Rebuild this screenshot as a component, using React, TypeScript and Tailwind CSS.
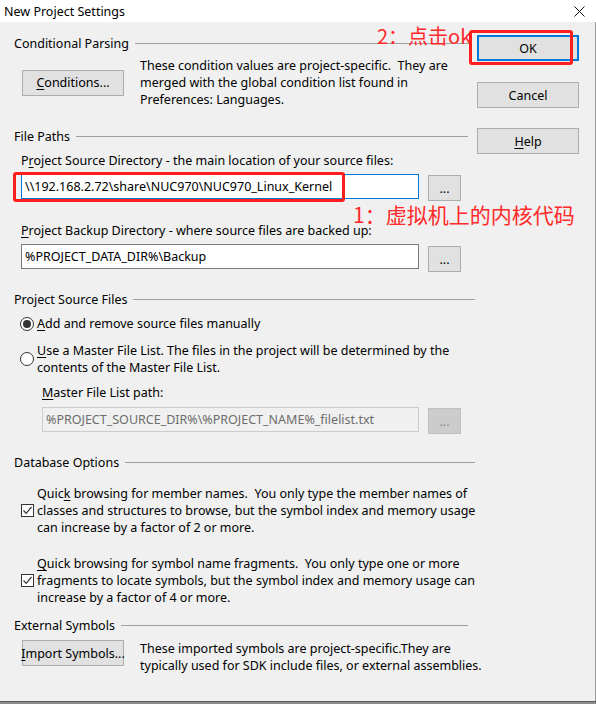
import React from "react";

const Btn: React.FC<{ children: React.ReactNode; className?: string }> = ({
  children,
  className = "",
}) => (
  <div
    className={`shrink-0 whitespace-nowrap flex items-center justify-center bg-[#e1e1e1] border border-[#adadad] ${className}`}
  >
    {children}
  </div>
);

const GroupHeader: React.FC<{ title: string; end?: string }> = ({
  title,
  end = "mr-[2px]",
}) => (
  <div className={`flex items-center h-[16px] ${end}`}>
    <span className="whitespace-nowrap">{title}</span>
    <div className="flex-1 h-px bg-[#a0a0a0] ml-[6px]" />
  </div>
);

const Check = () => (
  <div className="w-[13px] h-[13px] shrink-0 border border-[#333] bg-white flex items-center justify-center">
    <svg width="11" height="11" viewBox="0 0 11 11">
      <path d="M1.5 5.5 L4.2 8.3 L9.5 2" fill="none" stroke="#333" strokeWidth="1.2" />
    </svg>
  </div>
);

const Radio: React.FC<{ on?: boolean }> = ({ on }) => (
  <div className="w-[14px] h-[14px] shrink-0 rounded-full border border-[#333] bg-white flex items-center justify-center">
    {on && <div className="w-[8px] h-[8px] rounded-full bg-[#333]" />}
  </div>
);

const U: React.FC<{ children: React.ReactNode }> = ({ children }) => (
  <span className="underline underline-offset-[2px] decoration-1">{children}</span>
);

export default function App() {
  return (
    <div className="w-[596px] h-[704px] relative flex flex-col bg-[#f0f0f0] overflow-hidden font-['Noto_Sans','Noto_Sans_CJK_SC',sans-serif] text-[12.5px] leading-[17px] text-black">
      {/* title bar */}
      <div className="h-[22px] shrink-0 bg-white flex items-center justify-between pl-[4px] pr-[11px]">
        <span className="text-[12.5px]">New Project Settings</span>
        <svg width="11" height="11" viewBox="0 0 11 11">
          <path d="M0.5 0.5 L10.5 10.5 M10.5 0.5 L0.5 10.5" stroke="#111" strokeWidth="1" />
        </svg>
      </div>

      <div className="flex-1 flex border-r border-[#9a9a9a]">
        {/* left column */}
        <div className="w-[477px] shrink-0 pl-[14px] flex flex-col">
          <div className="mt-[13px]">
            <GroupHeader title="Conditional Parsing" end="mr-[7px]" />
          </div>
          <div className="mt-[6px] flex items-center">
            <Btn className="ml-[8px] w-[102px] h-[26px]">
              <span>
                <U>C</U>onditions...
              </span>
            </Btn>
            <div className="ml-[16px] whitespace-pre">
              {"These condition values are project-specific.  They are\nmerged with the global condition list found in\nPreferences: Languages."}
            </div>
          </div>

          <div className="mt-[20px]">
            <GroupHeader title="File Paths" end="mr-[9px]" />
          </div>
          <div className="mt-[8px] pl-[7px] whitespace-nowrap">
            P<U>r</U>oject Source Directory - the main location of your source files:
          </div>
          <div className="mt-[5px] pl-[7px] flex items-start">
            <div className="w-[398px] h-[25px] shrink-0 bg-white border border-[#0078d7] flex items-center pl-[3px] whitespace-nowrap">
              {"\\\\192.168.2.72\\share\\NUC970\\NUC970_Linux_Kernel"}
            </div>
            <Btn className="ml-[9px] mt-[1px] w-[33px] h-[26px]">...</Btn>
          </div>
          <div className="mt-[21px] pl-[7px] whitespace-nowrap">
            <U>P</U>roject Backup Directory - where source files are backed up:
          </div>
          <div className="mt-[5px] pl-[7px] flex items-start">
            <div className="w-[398px] h-[25px] shrink-0 bg-white border border-[#7a7a7a] flex items-center pl-[3px] whitespace-nowrap">
              {"%PROJECT_DATA_DIR%\\Backup"}
            </div>
            <Btn className="ml-[9px] mt-[2px] w-[33px] h-[26px]">...</Btn>
          </div>

          <div className="mt-[19px]">
            <GroupHeader title="Project Source Files" end="mr-[2px]" />
          </div>
          <div className="mt-[8px] pl-[6px] flex items-center">
            <Radio on />
            <span className="ml-[3px] whitespace-nowrap">
              <U>A</U>dd and remove source files manually
            </span>
          </div>
          <div className="mt-[10px] pl-[6px] flex items-center">
            <Radio />
            <div className="ml-[3px] whitespace-nowrap">
              <U>U</U>se a Master File List. The files in the project will be determined by the
              <br />
              contents of the Master File List.
            </div>
          </div>
          <div className="mt-[8px] pl-[28px] whitespace-nowrap">
            <U>M</U>aster File List path:
          </div>
          <div className="mt-[6px] pl-[28px] flex items-start">
            <div className="w-[377px] h-[25px] shrink-0 bg-[#f0f0f0] border border-[#cccccc] text-[#6d6d6d] flex items-center pl-[3px] whitespace-nowrap">
              {"%PROJECT_SOURCE_DIR%\\%PROJECT_NAME%_filelist.txt"}
            </div>
            <div className="ml-[9px] mt-[1px] w-[33px] h-[26px] shrink-0 bg-[#cccccc] border border-[#bfbfbf] text-[#8a8a8a] flex items-center justify-center">
              ...
            </div>
          </div>

          <div className="mt-[20px]">
            <GroupHeader title="Database Options" end="mr-[2px]" />
          </div>
          <div className="mt-[15px] pl-[7px] flex items-center">
            <Check />
            <div className="ml-[3px] whitespace-nowrap">
              <div>
                Quic<U>k</U> browsing for member names.{"\u00a0\u00a0"}You only type the member names of
              </div>
              <div>classes and structures to browse, but the symbol index and memory usage</div>
              <div>can increase by a factor of 2 or more.</div>
            </div>
          </div>
          <div className="mt-[19px] pl-[7px] flex items-center">
            <Check />
            <div className="ml-[3px] whitespace-nowrap">
              <div>
                <U>Q</U>uick browsing for symbol name fragments.{"\u00a0\u00a0"}You only type one or more
              </div>
              <div>fragments to locate symbols, but the symbol index and memory usage can</div>
              <div>increase by a factor of 4 or more.</div>
            </div>
          </div>

          <div className="mt-[11px]">
            <GroupHeader title="External Symbols" end="mr-[9px]" />
          </div>
          <div className="mt-[7px] flex items-start">
            <Btn className="ml-[8px] w-[102px] h-[26px]">
              <span>
                <U>I</U>mport Symbols...
              </span>
            </Btn>
            <div className="ml-[16px] whitespace-pre">
              {"These imported symbols are project-specific.They are\ntypically used for SDK include files, or external assemblies."}
            </div>
          </div>
        </div>

        {/* right column */}
        <div className="flex flex-col">
          <div className="mt-[13px] w-[102px] h-[26px] bg-[#e1e1e1] border-2 border-[#0078d7] flex items-center justify-center">
            OK
          </div>
          <Btn className="mt-[21px] w-[102px] h-[26px]">Cancel</Btn>
          <Btn className="mt-[20px] w-[102px] h-[26px]">
            <span>
              <U>H</U>elp
            </span>
          </Btn>
        </div>
      </div>

      <div className="h-px shrink-0 bg-[#5a5a5a]" />
      <div className="h-[2px] shrink-0 bg-[#8c8c8c]" />

      {/* annotations */}
      <div className="absolute left-[377px] top-[22px] text-[20px] leading-[28px] text-[#ff2a2a] font-['Noto_Sans_CJK_SC',sans-serif] whitespace-nowrap">
        2：点击ok
      </div>
      <div className="absolute left-[469px] top-[30px] w-[104px] h-[35px] border-[3px] border-[#ff1e1e] rounded-[3px]" />
      <div className="absolute left-[13px] top-[172px] w-[332px] h-[30px] border-[3px] border-[#ff1e1e] rounded-[3px]" />
      <div className="absolute left-[353px] top-[199px] text-[21px] leading-[30px] text-[#ff2a2a] font-['Noto_Sans_CJK_SC',sans-serif] whitespace-nowrap">
        1：虚拟机上的内核代码
      </div>
    </div>
  );
}
